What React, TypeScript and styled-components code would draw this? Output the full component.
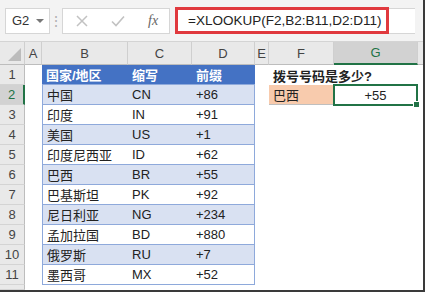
import styled, { createGlobalStyle } from "styled-components";

const GlobalStyle = createGlobalStyle`
  html, body {
    margin: 0;
    padding: 0;
    background: #ffffff;
  }
  body {
    font-family: "Liberation Sans", "Noto Sans CJK SC", sans-serif;
  }
`;

const Frame = styled.div`
  width: 425px;
  height: 292px;
  box-sizing: border-box;
  border-right: 2px solid #3a3a3a;
  border-bottom: 2px solid #3a3a3a;
  overflow: hidden;
  display: flex;
  flex-direction: column;
  background: #ffffff;
`;

const FormulaBar = styled.div`
  height: 42px;
  box-sizing: border-box;
  background: #f3f3f3;
  border-bottom: 1px solid #d4d4d4;
  display: flex;
  align-items: center;
  padding: 0 5px 0 5px;
  gap: 0;
`;

const NameBox = styled.div`
  width: 45px;
  height: 26px;
  box-sizing: border-box;
  background: #ffffff;
  border: 1px solid #d6d6d6;
  display: flex;
  align-items: center;
  justify-content: space-between;
  padding: 0 5px 0 6px;
  font-size: 13px;
  color: #333;
`;

const Caret = styled.span`
  width: 0;
  height: 0;
  border-left: 4px solid transparent;
  border-right: 4px solid transparent;
  border-top: 4px solid #777;
`;

const Grip = styled.div`
  width: 12px;
  display: flex;
  justify-content: center;
  color: #b0b0b0;
  font-size: 14px;
`;

const ButtonBox = styled.div`
  width: 108px;
  height: 26px;
  box-sizing: border-box;
  background: #ffffff;
  border: 1px solid #d6d6d6;
  display: flex;
  align-items: center;
  gap: 23px;
  padding: 0 0 0 13px;
`;

const Fx = styled.span`
  font-family: "Liberation Serif", serif;
  font-style: italic;
  font-size: 14px;
  color: #666;
`;

const FormulaInput = styled.div`
  flex: 1;
  height: 26px;
  margin-left: 5px;
  margin-right: 3px;
  box-sizing: border-box;
  background: #ffffff;
  border-top: 1px solid #d6d6d6;
  border-bottom: 1px solid #d6d6d6;
  display: flex;
  align-items: center;
`;

const Highlight = styled.div`
  height: 27px;
  box-sizing: border-box;
  border: 3px solid #e0393e;
  display: flex;
  align-items: center;
  padding: 0 5px 0 10px;
  font-size: 13.5px;
  color: #222;
  white-space: nowrap;
`;

const Sheet = styled.div`
  flex: 1;
  display: grid;
  grid-template-columns: 25px 17px 86px 64px 63px 14px 65px 84px 1fr;
  grid-template-rows: 23px repeat(11, 20px) 1fr;
  font-size: 13px;
  overflow: hidden;
`;

const Corner = styled.div`
  background: #e9e9e9;
  border-right: 1px solid #cfcfcf;
  border-bottom: 1px solid #bdbdbd;
  position: relative;
  &::after {
    content: "";
    position: absolute;
    right: 3px;
    bottom: 3px;
    width: 0;
    height: 0;
    border-left: 13px solid transparent;
    border-bottom: 13px solid #bcbcbc;
  }
`;

const ColHead = styled.div<{ $active?: boolean }>`
  background: ${(p) => (p.$active ? "#d2d2d2" : "#e9e9e9")};
  border-right: 1px solid #cfcfcf;
  border-bottom: ${(p) => (p.$active ? "2px solid #217346" : "1px solid #bdbdbd")};
  color: ${(p) => (p.$active ? "#217346" : "#444")};
  display: flex;
  align-items: center;
  justify-content: center;
  font-size: 13px;
`;

const RowHead = styled.div<{ $active?: boolean }>`
  background: ${(p) => (p.$active ? "#d2d2d2" : "#e9e9e9")};
  border-right: ${(p) => (p.$active ? "2px solid #217346" : "1px solid #bdbdbd")};
  border-bottom: 1px solid #d4d4d4;
  color: ${(p) => (p.$active ? "#217346" : "#444")};
  display: flex;
  align-items: center;
  justify-content: center;
  font-size: 13px;
`;

const Cell = styled.div<{
  $bg?: string;
  $bold?: boolean;
  $color?: string;
  $center?: boolean;
  $line?: string;
  $edge?: "left" | "right";
}>`
  background: ${(p) => p.$bg || "transparent"};
  font-weight: ${(p) => (p.$bold ? 700 : 400)};
  color: ${(p) => p.$color || "#222"};
  display: flex;
  align-items: center;
  justify-content: ${(p) => (p.$center ? "center" : "flex-start")};
  padding: 0 4px;
  box-sizing: border-box;
  white-space: nowrap;
  border-bottom: ${(p) => (p.$line ? `1px solid ${p.$line}` : "none")};
  border-left: ${(p) => (p.$edge === "left" ? "1px solid #8ea9db" : "none")};
  border-right: ${(p) => (p.$edge === "right" ? "1px solid #8ea9db" : "none")};
`;

const Selected = styled.div`
  position: relative;
  border: 2px solid #217346;
  box-sizing: border-box;
  margin: -1px 0 -1px -1px;
  display: flex;
  align-items: center;
  justify-content: center;
  font-size: 13px;
  color: #222;
  &::after {
    content: "";
    position: absolute;
    right: -4px;
    bottom: -4px;
    width: 5px;
    height: 5px;
    background: #217346;
    border: 1px solid #ffffff;
  }
`;

const rows = [
  ["中国", "CN", "+86"],
  ["印度", "IN", "+91"],
  ["美国", "US", "+1"],
  ["印度尼西亚", "ID", "+62"],
  ["巴西", "BR", "+55"],
  ["巴基斯坦", "PK", "+92"],
  ["尼日利亚", "NG", "+234"],
  ["孟加拉国", "BD", "+880"],
  ["俄罗斯", "RU", "+7"],
  ["墨西哥", "MX", "+52"],
];

const cols = ["A", "B", "C", "D", "E", "F", "G", ""];

export default function App() {
  return (
    <>
      <GlobalStyle />
      <Frame>
        <FormulaBar>
          <NameBox>
            G2
            <Caret />
          </NameBox>
          <Grip>⋮</Grip>
          <ButtonBox>
            <svg width="12" height="12" viewBox="0 0 12 12">
              <path d="M1 1L11 11M11 1L1 11" stroke="#c2c2c2" strokeWidth="1.5" />
            </svg>
            <svg width="14" height="12" viewBox="0 0 14 12">
              <path d="M1 6.5L5 10.5L13 1.5" stroke="#c2c2c2" strokeWidth="1.6" fill="none" />
            </svg>
            <Fx>fx</Fx>
          </ButtonBox>
          <FormulaInput>
            <Highlight>=XLOOKUP(F2,B2:B11,D2:D11)</Highlight>
          </FormulaInput>
        </FormulaBar>
        <Sheet>
          <Corner />
          {cols.map((c, i) => (
            <ColHead key={i} $active={c === "G"}>
              {c}
            </ColHead>
          ))}

          <RowHead>1</RowHead>
          <Cell />
          <Cell $bg="#4472c4" $bold $color="#ffffff" $line="#8ea9db">国家/地区</Cell>
          <Cell $bg="#4472c4" $bold $color="#ffffff" $line="#8ea9db">缩写</Cell>
          <Cell $bg="#4472c4" $bold $color="#ffffff" $line="#8ea9db">前缀</Cell>
          <Cell />
          <Cell $bold $color="#222">拨号号码是多少?</Cell>
          <Cell />
          <Cell />

          {rows.map((r, i) => {
            const bg = i % 2 === 0 ? "#d9e1f2" : "#ffffff";
            const n = i + 2;
            return [
              <RowHead key={`h${n}`} $active={n === 2}>
                {n}
              </RowHead>,
              <Cell key={`a${n}`} />,
              <Cell key={`b${n}`} $bg={bg} $line="#8ea9db" $edge="left">
                {r[0]}
              </Cell>,
              <Cell key={`c${n}`} $bg={bg} $line="#8ea9db">
                {r[1]}
              </Cell>,
              <Cell key={`d${n}`} $bg={bg} $line="#8ea9db" $edge="right">
                {r[2]}
              </Cell>,
              <Cell key={`e${n}`} />,
              n === 2 ? (
                <Cell key={`f${n}`} $bg="#f8cbad" $line="#bfbfbf">
                  巴西
                </Cell>
              ) : (
                <Cell key={`f${n}`} />
              ),
              n === 2 ? <Selected key={`g${n}`}>+55</Selected> : <Cell key={`g${n}`} />,
              <Cell key={`x${n}`} />,
            ];
          })}
          <RowHead />
        </Sheet>
      </Frame>
    </>
  );
}
